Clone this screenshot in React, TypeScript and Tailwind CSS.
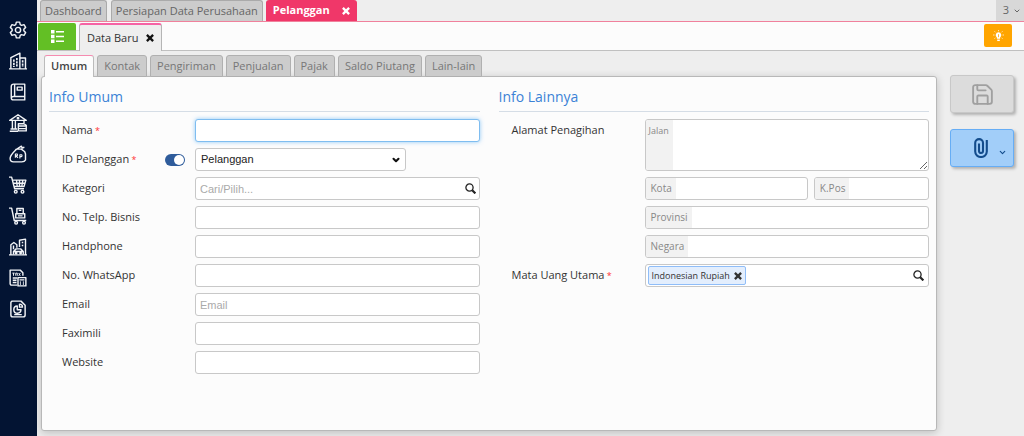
import type { ReactNode } from "react";
import { ChevronDown, Save } from "lucide-react";

const INPUT =
  "h-[23px] w-full rounded-[3px] border border-[#c8c8c8] bg-white px-1 font-['Liberation_Sans',Arial,sans-serif] text-[11px] text-[#222] outline-none placeholder:text-[#aaa]";

const menus: { name: string; icon: ReactNode }[] = [
  {
    name: "Pengaturan",
    icon: (
      <>
        <path d="M9.800 1.500h4.400l.8 3.300 1.800 1 3.200-1 2.200 3.700-2.400 2.400v2.200l2.400 2.400-2.200 3.700-3.200-1-1.800 1-.8 3.300H9.800L9 19.200l-1.800-1-3.200 1-2.200-3.700 2.400-2.400v-2.200L1.800 8.500 4 4.800l3.200 1 1.800-1z" />
        <circle cx="12" cy="12" r="3.500" />
      </>
    ),
  },
  {
    name: "Perusahaan",
    icon: (
      <>
        <path d="M0 22.500h24M2.500 22V7.500l12-6V22M14.500 8h7.500v14" />
        <path d="M6.500 10v10M10.500 8v12M18.200 11v9" strokeWidth="2.200" strokeDasharray="3 1.200" />
      </>
    ),
  },
  {
    name: "Buku Besar",
    icon: (
      <>
        <path d="M21 18V1.500H6a3 3 0 0 0-3 3v15a3 3 0 0 0 3 3h15V18H6a3 3 0 0 0-3 2M7.500 2v16" />
        <path d="M11 5.500h6.500v4H11z" />
      </>
    ),
  },
  {
    name: "Kas & Bank",
    icon: (
      <>
        <path d="M1 8.500 12 1l11 7.500zM2 20h9M1 23h11M4.500 9v11M8.500 9v11M20 9v3" />
        <circle cx="12" cy="5.500" r="1" />
        <path d="M12.500 13H20l3 2v7.500H12.500zM12.500 16H22M12.500 19.500H22" />
      </>
    ),
  },
  {
    name: "Persediaan",
    icon: (
      <>
        <path d="M10 5.500h6.500L21 9l1 3v8c-1 2-3 2.500-5 2.500H6c-3 0-4.500-2-4.500-4.500C1.500 13 6 9.500 10 5.500zM11 5l5.500-3.500 1 2.500 3-1" />
        <path d="M8.500 17v-5H11c1 2 0 2.500-2 2.500l3 2.500M14.500 18v-5H17c1 2 0 2.500-2 2.500" strokeWidth="1.500" />
      </>
    ),
  },
  {
    name: "Penjualan",
    icon: (
      <>
        <path d="M0 1.500h3.500L7.500 17H20M4.800 5.500H22.500L20 14H7M6 9.700h15M10 5.500l1 8.500M14 5.500V14M18.500 5.500 17 14" />
        <circle cx="9" cy="21" r="1.800" />
        <circle cx="18" cy="21" r="1.800" />
      </>
    ),
  },
  {
    name: "Pembelian",
    icon: (
      <>
        <path d="M0 1.500h3.500L7 18h16M9 14.500V9h12v5.500zM10.500 9V2h8.500v7M13 4.500h3.500M12 11.800h6" />
        <circle cx="9.500" cy="21" r="1.800" />
        <circle cx="20" cy="21" r="1.800" />
      </>
    ),
  },
  {
    name: "Aset Tetap",
    icon: (
      <>
        <path d="M0 22.500h24M2.500 22V9l4-3 4 3v4M14 12V3l8-1.500V22" />
        <path d="M6 22v-4l3.500-3.500h6L19 18v4M7 18h11M6 10v5M17 6h2M17 10h2" />
        <circle cx="9.500" cy="20" r="1" />
        <circle cx="15.500" cy="20" r="1" />
      </>
    ),
  },
  {
    name: "Pajak",
    icon: (
      <>
        <path d="M11 21.500H3.500a2 2 0 0 1-2-2v-18H15l3.500 3.500v4M5 12h6M5 15h5M5 18h5" />
        <path d="M4.500 5.500h3M6 5.500v3.500M9 9V5.500h2V9M13 5.500 15 9M15 5.500 13 9" strokeWidth="1.300" />
        <path d="M12 11.500h10.500v11H12zM14 14.500h6.500M14.500 17.500h1.500M18.500 17.500H20M14.500 20h1.500M18.500 20H20" />
      </>
    ),
  },
  {
    name: "Laporan",
    icon: (
      <>
        <path d="M4 1.500h12L21.500 7v13a2.500 2.500 0 0 1-2.500 2.500H5A2.500 2.500 0 0 1 2.500 20V3z" />
        <path d="M11 8a4.800 4.800 0 1 0 5 5h-5zM14 5.500a4 4 0 0 1 4 4h-4zM7 19.500h10" />
      </>
    ),
  },
];

const formTabs = ["Umum", "Kontak", "Pengiriman", "Penjualan", "Pajak", "Saldo Piutang", "Lain-lain"];

const CloseIcon = () => (
  <svg width="8" height="8" viewBox="0 0 9 9" stroke="currentColor" strokeWidth="2.600">
    <path d="M1 1l7 7M8 1L1 8" />
  </svg>
);

const SearchIcon = () => (
  <svg width="11" height="11" viewBox="0 0 11 11" fill="none" stroke="#222">
    <circle cx="4.500" cy="4.500" r="3.600" strokeWidth="1.300" />
    <path d="M7.200 7.200l3.200 3.200" strokeWidth="2.200" />
  </svg>
);

const BulbIcon = () => (
  <svg width="11" height="12" viewBox="0 0 11 12" fill="none" stroke="currentColor">
    <path
      d="M5.500 2.300a2.800 2.800 0 0 0-1.600 5.100V8.800h3.200V7.400a2.800 2.800 0 0 0-1.600-5.100z"
      fill="currentColor"
      stroke="none"
    />
    <path d="M5.500 0v1.300M0 5h1.500M9.500 5H11M1.500 1.300l1 1M9.500 1.300l-1 1M1.500 8.700l1-1M9.500 8.700l-1-1" strokeWidth=".7" />
    <path d="M4.200 10.300h2.600" strokeWidth="1.500" />
    <path d="M5.500 4.200v3" stroke="#ffa500" strokeWidth=".8" />
  </svg>
);

const Row = ({
  label,
  id,
  required,
  extra,
  children,
}: {
  label: string;
  id: string;
  required?: boolean;
  extra?: ReactNode;
  children: ReactNode;
}) => (
  <div className="flex items-start">
    <div className="flex h-[23px] w-[133px] shrink-0 items-center justify-between pr-2.5">
      <label htmlFor={id} className="whitespace-nowrap">
        {label}
        {required && <span className="text-[9px] text-[#f33]"> *</span>}
      </label>
      {extra}
    </div>
    <div className="min-w-0 flex-1">{children}</div>
  </div>
);

const Addon = ({ label, id, className = "" }: { label: string; id: string; className?: string }) => (
  <div className={`flex h-[23px] overflow-hidden rounded-[3px] border border-[#c8c8c8] bg-white ${className}`}>
    <label htmlFor={id} className="flex items-center bg-[#f2f2f2] pr-1 pl-[5px] text-[10px] text-[#888]">
      {label}
    </label>
    <input id={id} className="w-0 min-w-0 flex-1 px-1 text-[11px] outline-none" />
  </div>
);

const Heading = ({ children }: { children: ReactNode }) => (
  <h2 className="mb-[7px] h-[27px] border-b border-[#d5dde6] text-[14px] leading-6 text-[#3b82d6]">{children}</h2>
);

const App = () => {
  return (
    <div className="flex min-h-screen bg-[#eee] font-['Open_Sans','Segoe_UI',sans-serif] text-[11px] text-[#333]">
      <nav className="flex w-[37px] shrink-0 flex-col items-center gap-[11px] bg-[#031433] pt-5 pr-0.5">
        {menus.map((menu) => (
          <button key={menu.name} aria-label={menu.name} className="h-5 w-5">
            <svg
              viewBox="0 0 24 24"
              className="mx-auto h-[18px] w-[18px]"
              fill="none"
              stroke="#f2f4f7"
              strokeWidth="1.900"
              strokeLinejoin="round"
            >
              {menu.icon}
            </svg>
          </button>
        ))}
      </nav>

      <div className="flex min-w-0 flex-1 flex-col">
        <header className="flex h-[22px] items-stretch border-b border-[#f0819c] pl-[3px]">
          <button className="mr-1 rounded-t-[3px] border border-b-0 border-[#aaa] bg-[#ccc] px-1 text-[#666]">
            Dashboard
          </button>
          <button className="mr-[3px] rounded-t-[3px] border border-b-0 border-[#aaa] bg-[#ccc] px-1 text-[#666]">
            Persiapan Data Perusahaan
          </button>
          <div className="flex items-center gap-3 rounded-t-[3px] bg-[#f03769] px-[7px] font-bold text-white">
            Pelanggan
            <button aria-label="Tutup Pelanggan">
              <CloseIcon />
            </button>
          </div>
          <button className="ml-auto flex w-7 items-center justify-center gap-1 bg-[#d8d8d8] pl-1 text-[#666]">
            3
            <ChevronDown size={8} strokeWidth={3} />
          </button>
        </header>

        <div className="flex h-[29px] items-end border-b border-[#c0c0c0] bg-[#fcfcfc] pl-px">
          <button
            aria-label="Daftar"
            className="mr-[3px] flex h-[27px] w-[38px] items-center justify-center rounded-t-[2px] bg-[#63bf25] text-white"
          >
            <svg width="13" height="13" viewBox="0 0 13 13" fill="currentColor">
              <path d="M0 0h3.500v3.500H0zM0 4.700h3.500v3.500H0zM0 9.500h3.500V13H0zM5 1h8v1.500H5zM5 5.700h8v1.500H5zM5 10.500h8V12H5z" />
            </svg>
          </button>
          <div className="-mb-px flex h-7 items-center gap-2 rounded-t-[3px] border border-t-2 border-b-0 border-[#b5b5b5] border-t-[#f562a4] bg-[#eee] px-[7px]">
            Data Baru
            <button aria-label="Tutup Data Baru" className="text-[#111]">
              <CloseIcon />
            </button>
          </div>
          <button
            aria-label="Tips"
            className="mr-3 mb-[3px] ml-auto flex h-[23px] w-7 items-center justify-center rounded-[2px] bg-[#ffa500] text-white"
          >
            <BulbIcon />
          </button>
        </div>

        <div className="flex flex-1 gap-[13px] pt-1 pr-2.5 pb-[5px] pl-1">
          <main className="flex min-w-0 flex-1 flex-col">
            <div className="relative z-10 -mb-px flex h-[22px] items-stretch gap-[3px] pl-[3px]">
              {formTabs.map((tab, i) => (
                <button
                  key={tab}
                  className={
                    i === 0
                      ? "rounded-t-[3px] border border-b-0 border-[#bbb] border-t-[#f58bb0] bg-[#fcfcfc] px-1.5 font-semibold text-[#444]"
                      : "rounded-t-[3px] border border-[#b0b0b0] bg-[#ccc] px-1.5 text-[#777]"
                  }
                >
                  {tab}
                </button>
              ))}
            </div>

            <form className="grid flex-1 grid-cols-2 content-start gap-x-[19px] rounded-[3px] border border-[#b8b8b8] bg-[#fcfcfc] px-[7px] pt-2 shadow-[0_2px_8px_rgba(0,0,0,0.2)]">
              <section>
                <Heading>Info Umum</Heading>
                <div className="flex flex-col gap-1.5 pl-[13px]">
                  <Row label="Nama" id="nama" required>
                    <input
                      id="nama"
                      autoFocus
                      className={`${INPUT} focus:border-[#7fbdf0] focus:shadow-[0_0_4px_rgba(100,180,245,0.7)]`}
                    />
                  </Row>
                  <Row
                    label="ID Pelanggan"
                    id="tipe"
                    required
                    extra={
                      <label className="relative h-3 w-5">
                        <input
                          type="checkbox"
                          defaultChecked
                          aria-label="Penomoran otomatis"
                          className="peer block h-3 w-5 appearance-none rounded-full bg-[#bbb] checked:bg-[#2f5c9b]"
                        />
                        <span className="absolute top-px left-px h-2.5 w-2.5 rounded-full bg-white peer-checked:left-[9px]" />
                      </label>
                    }
                  >
                    <div className="relative w-[74%]">
                      <select id="tipe" className={`${INPUT} appearance-none pl-[5px]`}>
                        <option>Pelanggan</option>
                      </select>
                      <ChevronDown
                        size={10}
                        strokeWidth={5}
                        className="pointer-events-none absolute top-[7px] right-[5px] text-[#111]"
                      />
                    </div>
                  </Row>
                  <Row label="Kategori" id="kategori">
                    <div className="relative">
                      <input id="kategori" placeholder="Cari/Pilih..." className={INPUT} />
                      <button type="button" aria-label="Cari kategori" className="absolute top-1.5 right-1">
                        <SearchIcon />
                      </button>
                    </div>
                  </Row>
                  <Row label="No. Telp. Bisnis" id="telp">
                    <input id="telp" className={INPUT} />
                  </Row>
                  <Row label="Handphone" id="hp">
                    <input id="hp" className={INPUT} />
                  </Row>
                  <Row label="No. WhatsApp" id="wa">
                    <input id="wa" className={INPUT} />
                  </Row>
                  <Row label="Email" id="email">
                    <input id="email" placeholder="Email" className={INPUT} />
                  </Row>
                  <Row label="Faximili" id="fax">
                    <input id="fax" className={INPUT} />
                  </Row>
                  <Row label="Website" id="web">
                    <input id="web" className={INPUT} />
                  </Row>
                </div>
              </section>

              <section>
                <Heading>Info Lainnya</Heading>
                <div className="flex flex-col gap-1.5 pl-[13px]">
                  <Row label="Alamat Penagihan" id="jalan">
                    <div className="flex flex-col gap-1.5">
                      <div className="flex h-[52px] overflow-hidden rounded-[3px] border border-[#c8c8c8] bg-white">
                        <label htmlFor="jalan" className="bg-[#f2f2f2] pt-1 pr-1 pl-[3px] text-[9px] text-[#888]">
                          Jalan
                        </label>
                        <textarea id="jalan" className="w-0 flex-1 resize-y px-1 text-[11px] outline-none" />
                      </div>
                      <div className="flex gap-1.5">
                        <Addon label="Kota" id="kota" className="min-w-0 grow-[164] basis-0" />
                        <Addon label="K.Pos" id="kpos" className="min-w-0 grow-[115] basis-0" />
                      </div>
                      <Addon label="Provinsi" id="provinsi" />
                      <Addon label="Negara" id="negara" />
                    </div>
                  </Row>
                  <Row label="Mata Uang Utama" id="matauang" required>
                    <div className="flex h-[23px] items-center rounded-[3px] border border-[#c8c8c8] bg-white pr-1 pl-0.5">
                      <span className="flex h-[19px] shrink-0 items-center gap-1 rounded-[2px] border border-[#8fbdf8] bg-[#e3eefd] px-[3px] text-[9px]">
                        Indonesian Rupiah
                        <button type="button" aria-label="Hapus Indonesian Rupiah">
                          <CloseIcon />
                        </button>
                      </span>
                      <input id="matauang" className="w-0 flex-1 px-1 outline-none" />
                      <button type="button" aria-label="Cari mata uang">
                        <SearchIcon />
                      </button>
                    </div>
                  </Row>
                </div>
              </section>
            </form>
          </main>

          <aside className="flex w-16 shrink-0 flex-col gap-4 pt-5">
            <button
              aria-label="Simpan"
              className="flex h-[38px] items-center justify-center rounded-[3px] border border-[#c8c8c8] bg-[#dcdcdc] text-[#a0a0a0] shadow-[2px_2px_3px_rgba(0,0,0,0.25)]"
            >
              <Save size={25} strokeWidth={1.8} />
            </button>
            <button
              aria-label="Lampiran"
              className="flex h-[38px] items-center justify-end gap-2.5 rounded-[3px] border border-[#66adf5] bg-[#a2cef9] pr-1.5 text-[#134c8c] shadow-[2px_2px_3px_rgba(0,0,0,0.25)]"
            >
              <svg width="14" height="20" viewBox="0 0 14 20" fill="none" stroke="currentColor" strokeWidth="2.100">
                <path d="M12.800 2v11.500a5.800 5.500 0 0 1-11.600 0V5a3.900 3.900 0 0 1 7.800 0v8a2 2 0 0 1-4 0V5.500" />
              </svg>
              <ChevronDown size={9} strokeWidth={3} className="mt-2" />
            </button>
          </aside>
        </div>
      </div>
    </div>
  );
};

export default App;
